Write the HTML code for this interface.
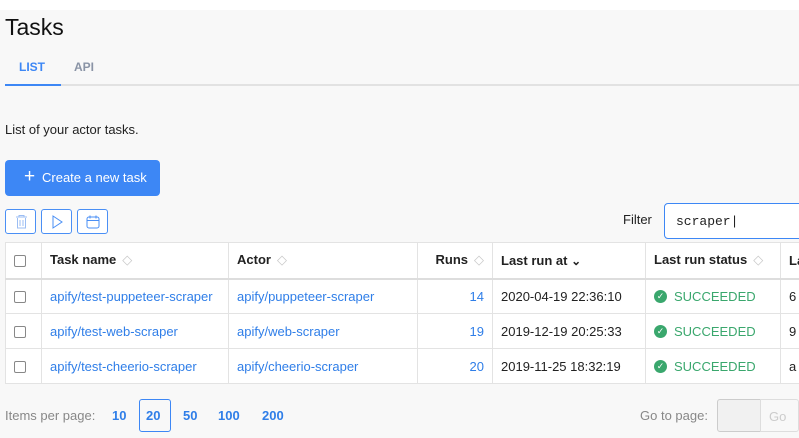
<!DOCTYPE html>
<html><head><style>
*{box-sizing:border-box;margin:0;padding:0}
body{width:799px;height:438px;overflow:hidden;background:#f8f8f8;font-family:"Liberation Sans",sans-serif;color:#222;position:relative}
.top{position:absolute;left:0;top:0;width:799px;height:10px;background:#fff}
.abs{position:absolute}
h1{position:absolute;left:5px;top:14px;font-size:23px;font-weight:400;color:#111}
.tab{position:absolute;top:60px;font-size:12px;font-weight:700}
.btn{position:absolute;left:5px;top:160px;width:155px;height:36px;background:#3d87f5;border-radius:4px;color:#fff;font-size:13px;line-height:36px;padding-left:37px}
.ib{position:absolute;top:209px;width:31px;height:25px;border:1px solid #4a8ff5;border-radius:3px;background:#fff}
table{position:absolute;left:5px;top:242px;width:815px;border-collapse:collapse;background:#fff;font-size:13px;table-layout:fixed}
td,th{border:1px solid #e3e3e3;height:35px;padding:0 8px;white-space:nowrap;overflow:hidden;text-align:left}
th{font-weight:700;height:36px;border-bottom:2px solid #ddd;color:#222}
a{color:#2f7ee8;text-decoration:none}
.cb{display:inline-block;width:12px;height:12px;border:1px solid #888;border-radius:2px;vertical-align:middle}
.s{color:#c9c9c9;font-size:13px;margin-left:6px;font-weight:400}
.ok{color:#3aa76d}
.chk{display:inline-block;width:13px;height:13px;border-radius:50%;background:#3aa76d;color:#fff;font-size:9px;text-align:center;line-height:13px;vertical-align:middle;margin-right:7px}
.ok span.t{vertical-align:middle}
.pg{position:absolute;top:408px;font-size:13px;font-weight:700;color:#2f7ee8}
</style></head><body>
<div class="top"></div>
<h1>Tasks</h1>
<div class="tab" style="left:19px;color:#3d87f5">LIST</div>
<div class="tab" style="left:74px;color:#8a94a6">API</div>
<div class="abs" style="left:5px;top:84px;width:794px;height:2px;background:#e2e2e2"></div>
<div class="abs" style="left:5px;top:84px;width:56px;height:2px;background:#3d87f5"></div>
<div class="abs" style="left:5px;top:122px;font-size:13px">List of your actor tasks.</div>
<div class="btn"><span style="position:absolute;left:19px;top:-1px;font-size:19px">+</span>Create a new task</div>
<div class="ib" style="left:5px"><svg width="31" height="25" viewBox="0 0 31 25"><path d="M10 7h11M13 7V5.5h5V7M11.5 8v10h8V8M14 10v6M17 10v6" fill="none" stroke="#9bbdf3" stroke-width="1"/></svg></div>
<div class="ib" style="left:41px"><svg width="31" height="25" viewBox="0 0 31 25"><path d="M11 6l9 6-9 6z" fill="none" stroke="#4a8ff5" stroke-width="1"/></svg></div>
<div class="ib" style="left:77px"><svg width="31" height="25" viewBox="0 0 31 25"><rect x="9" y="7" width="12" height="11" rx="2" fill="none" stroke="#4a8ff5"/><path d="M9 10.5h12M12 5.5v3M18 5.5v3" stroke="#4a8ff5"/></svg></div>
<div class="abs" style="left:623px;top:212px;font-size:13px">Filter</div>
<div class="abs" style="left:664px;top:203px;width:140px;height:36px;border:1px solid #3d87f5;border-radius:4px;background:#fff;font-family:'Liberation Mono',monospace;font-size:13px;padding:10px 0 0 11px">scraper|</div>
<table>
<colgroup><col style="width:36px"><col style="width:187px"><col style="width:189px"><col style="width:75px"><col style="width:153px"><col style="width:135px"><col style="width:40px"></colgroup>
<tr><th><span class="cb"></span></th><th>Task name<span class="s">◇</span></th><th>Actor<span class="s">◇</span></th><th style="text-align:right">Runs<span class="s">◇</span></th><th>Last run at <span style="font-size:12px">⌄</span></th><th>Last run status<span class="s">◇</span></th><th>La</th></tr>
<tr><td><span class="cb"></span></td><td><a>apify/test-puppeteer-scraper</a></td><td><a>apify/puppeteer-scraper</a></td><td style="text-align:right"><a>14</a></td><td>2020-04-19 22:36:10</td><td class="ok"><span class="chk">✓</span><span class="t">SUCCEEDED</span></td><td>6</td></tr>
<tr><td><span class="cb"></span></td><td><a>apify/test-web-scraper</a></td><td><a>apify/web-scraper</a></td><td style="text-align:right"><a>19</a></td><td>2019-12-19 20:25:33</td><td class="ok"><span class="chk">✓</span><span class="t">SUCCEEDED</span></td><td>9</td></tr>
<tr><td><span class="cb"></span></td><td><a>apify/test-cheerio-scraper</a></td><td><a>apify/cheerio-scraper</a></td><td style="text-align:right"><a>20</a></td><td>2019-11-25 18:32:19</td><td class="ok"><span class="chk">✓</span><span class="t">SUCCEEDED</span></td><td>a</td></tr>
</table>
<div class="abs" style="left:5px;top:408px;font-size:13px;color:#888">Items per page:</div>
<div class="pg" style="left:112px">10</div>
<div class="abs" style="left:139px;top:399px;width:32px;height:33px;border:1px solid #3d87f5;border-radius:3px"></div>
<div class="pg" style="left:146px">20</div>
<div class="pg" style="left:183px">50</div>
<div class="pg" style="left:218px">100</div>
<div class="pg" style="left:262px">200</div>
<div class="abs" style="left:640px;top:408px;font-size:13px;color:#888">Go to page:</div>
<div class="abs" style="left:717px;top:399px;width:44px;height:33px;border:1px solid #ccc;border-radius:3px 0 0 3px;background:#f1f1f1"></div>
<div class="abs" style="left:760px;top:399px;width:39px;height:33px;border:1px solid #ddd;border-radius:0 3px 3px 0;color:#ccc;font-size:13px;padding:9px 0 0 8px">Go</div>
</body></html>
